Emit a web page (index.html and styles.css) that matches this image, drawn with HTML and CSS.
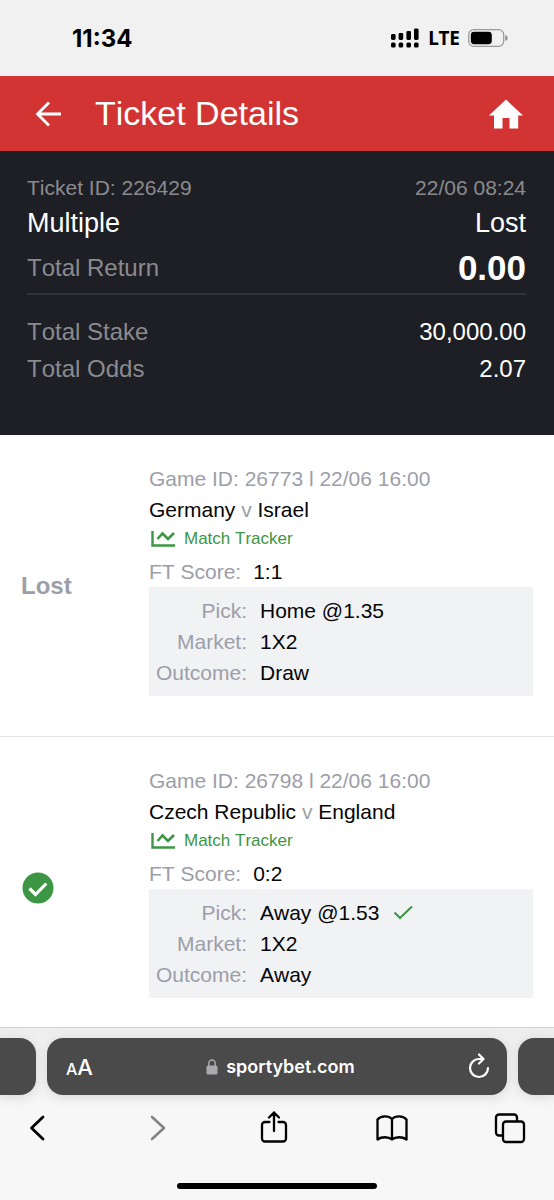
FILE: index.html
```html
<!DOCTYPE html>
<html lang="en">
<head>
<meta charset="utf-8">
<meta name="viewport" content="width=device-width, initial-scale=1">
<title>Ticket Details</title>
<link rel="stylesheet" href="styles.css">
</head>
<body>
<div class="status-bar">
  <time class="clock">11:34</time>
  <div class="status-icons">
    <svg class="signal" width="30" height="20" viewBox="0 0 30 20" aria-hidden="true">
      <rect x="1" y="6" width="4.600" height="6" rx="1.400"/><rect x="8.600" y="5" width="4.600" height="7" rx="1.400"/><rect x="16.400" y="3" width="4.600" height="9" rx="1.400"/><rect x="24" y="0.500" width="4.600" height="11.500" rx="1.400"/>
      <rect x="1" y="14.500" width="4.600" height="5" rx="1.500"/><rect x="8.600" y="14.500" width="4.600" height="5" rx="1.500"/><rect x="16.400" y="14.500" width="4.600" height="5" rx="1.500"/><rect x="24" y="14.500" width="4.600" height="5" rx="1.500"/>
    </svg>
    <span class="network">LTE</span>
    <svg width="40" height="18" viewBox="0 0 40 18" aria-hidden="true">
      <rect x="0.700" y="0.700" width="35" height="16.600" rx="5" fill="none" stroke="#9b9b9b" stroke-width="1.300"/>
      <rect x="2.800" y="2.800" width="21" height="12.400" rx="3.400"/>
      <path d="M37.300 6v6c1.500-.6 2.300-1.700 2.300-3s-.8-2.400-2.300-3z" fill="#8c8c8c"/>
    </svg>
  </div>
</div>

<header class="page-header">
  <button class="icon-button" type="button" aria-label="Back">
    <svg width="26" height="26" viewBox="0 0 26 26" fill="none" stroke="#fff" stroke-width="2.800"><path d="M26 13H3M14 1.500L2.500 13 14 24.500"/></svg>
  </button>
  <h1 class="page-title">Ticket Details</h1>
  <a class="home-link" href="#" aria-label="Home">
    <svg width="34" height="30" viewBox="0 0 34 30" fill="#fff"><path d="M17 0.500L34 16.500H29.200V29.500H20.500V19H13.500V29.500H5V16.500H0z"/></svg>
  </a>
</header>

<section class="summary">
  <div class="line line-id"><span>Ticket ID: 226429</span><span>22/06 08:24</span></div>
  <div class="line line-type"><span>Multiple</span><span>Lost</span></div>
  <div class="line line-return"><span class="muted">Total Return</span><strong class="amount">0.00</strong></div>
  <div class="totals">
    <div class="line line-total"><span class="muted">Total Stake</span><span>30,000.00</span></div>
    <div class="line line-total"><span class="muted">Total Odds</span><span>2.07</span></div>
  </div>
</section>

<main class="bets">
  <article class="bet">
    <div class="bet-status">Lost</div>
    <div class="bet-body">
      <p class="game muted-light">Game ID: 26773 l 22/06 16:00</p>
      <p class="teams">Germany <span class="muted-light">v</span> Israel</p>
      <a class="tracker" href="#">
        <svg width="24" height="17" viewBox="0 0 24 17" fill="none" stroke="#3c9644"><path d="M1.500 1v14.500H24" stroke-width="2.400"/><path d="M6.500 9l5-5.500 5.500 5.500 6-6" stroke-width="2.600"/></svg>
        Match Tracker</a>
      <p class="score"><span class="muted-light">FT Score:</span><span>1:1</span></p>
      <dl class="details">
        <dt>Pick:</dt><dd>Home @1.35</dd>
        <dt>Market:</dt><dd>1X2</dd>
        <dt>Outcome:</dt><dd>Draw</dd>
      </dl>
    </div>
  </article>
  <article class="bet">
    <div class="bet-status">
      <svg class="won" width="34" height="32" viewBox="0 0 34 32" role="img" aria-label="Won"><circle cx="17" cy="16" r="15.500" fill="#3c9644"/><path d="M8.500 16.500l6 6L25.300 11.500" fill="none" stroke="#fff" stroke-width="3.200"/></svg>
    </div>
    <div class="bet-body">
      <p class="game muted-light">Game ID: 26798 l 22/06 16:00</p>
      <p class="teams">Czech Republic <span class="muted-light">v</span> England</p>
      <a class="tracker" href="#">
        <svg width="24" height="17" viewBox="0 0 24 17" fill="none" stroke="#3c9644"><path d="M1.500 1v14.500H24" stroke-width="2.400"/><path d="M6.500 9l5-5.500 5.500 5.500 6-6" stroke-width="2.600"/></svg>
        Match Tracker</a>
      <p class="score"><span class="muted-light">FT Score:</span><span>0:2</span></p>
      <dl class="details">
        <dt>Pick:</dt><dd>Away @1.53 <svg width="20" height="15" viewBox="0 0 20 15" fill="none" stroke="#3c9644" stroke-width="2"><path d="M1.500 7.500l5.500 5.500L19 1.500"/></svg></dd>
        <dt>Market:</dt><dd>1X2</dd>
        <dt>Outcome:</dt><dd>Away</dd>
      </dl>
    </div>
  </article>
</main>

<footer class="browser-bar">
  <div class="tabs">
    <div class="tab-edge tab-edge-left"></div>
    <div class="address">
      <button class="text-size" type="button" aria-label="Text size"><span class="small-a">A</span>A</button>
      <div class="site">
        <svg width="12" height="16" viewBox="0 0 12 16" aria-hidden="true"><rect x="0.500" y="6.500" width="11" height="9" rx="1.500" fill="#a9a9ae"/><path d="M2.800 7V4.500a3.200 3.500 0 0 1 6.400 0V7" fill="none" stroke="#a9a9ae" stroke-width="1.500"/></svg>
        <span>sportybet.com</span>
      </div>
      <button class="icon-button" type="button" aria-label="Reload">
        <svg width="22" height="28" viewBox="0 0 22 28" fill="none" stroke="#fff" stroke-width="2.200" stroke-linecap="round" stroke-linejoin="round"><path d="M20 15a9 9 0 1 1-9-9h4.500M11 1.500l4.500 4.500-4.500 4.500"/></svg>
      </button>
    </div>
    <div class="tab-edge tab-edge-right"></div>
  </div>
  <nav class="tools" aria-label="Browser">
    <button class="tool" type="button" aria-label="Previous page"><svg width="34" height="34" viewBox="0 0 34 34"><path d="M23 7L11.500 18 23 29" stroke-width="2.800"/></svg></button>
    <button class="tool tool-off" type="button" aria-label="Next page"><svg width="34" height="34" viewBox="0 0 34 34"><path d="M14 7L26 18 14 29" stroke-width="2.600"/></svg></button>
    <button class="tool" type="button" aria-label="Share"><svg width="34" height="34" viewBox="0 0 34 34"><path d="M12.500 12H8a3 3 0 0 0-3 3v13.500a3 3 0 0 0 3 3h18a3 3 0 0 0 3-3V15a3 3 0 0 0-3-3h-4.500M17 21V2.500M12 7.500l5-5 5 5"/></svg></button>
    <button class="tool" type="button" aria-label="Bookmarks"><svg width="34" height="34" viewBox="0 0 34 34"><path d="M17 9C13.500 5.500 6 5.500 2.500 9.500v20c4-3 11-3 14.500 0 3.500-3 10.500-3 14.500 0v-20C28 5.500 20.500 5.500 17 9zM17 9v20.500"/></svg></button>
    <button class="tool" type="button" aria-label="Tabs"><svg width="34" height="34" viewBox="0 0 34 34"><path d="M9.500 25.500H6a3 3 0 0 1-3-3V7.500a3 3 0 0 1 3-3h15a3 3 0 0 1 3 3V11"/><rect x="10" y="11.500" width="21" height="20.500" rx="3"/></svg></button>
  </nav>
  <div class="home-indicator"></div>
</footer>
</body>
</html>
```
FILE: styles.css
```css
* { box-sizing: border-box; }

body {
  margin: 0;
  height: 100vh;
  display: flex;
  flex-direction: column;
  background: #fff;
  color: #050505;
  font-family: "Liberation Sans", Arial, sans-serif;
  font-size: 21px;
  font-kerning: none;
}

h1, p, dl, dd { margin: 0; }
button { padding: 0; border: 0; background: none; color: inherit; font: inherit; }
svg { display: block; flex: none; }

.status-bar {
  display: flex;
  justify-content: space-between;
  align-items: center;
  height: 76px;
  padding: 0 46px 0 72px;
  background: #f1f1f1;
  color: #000;
}
.clock { font: 700 24px Inter, sans-serif; }
.status-icons { display: flex; align-items: center; gap: 8px; }
.network { font: 700 19px "Noto Sans", sans-serif; }

.page-header {
  display: flex;
  align-items: center;
  height: 75px;
  padding: 0 31px 0 35px;
  background: #d23434;
  color: #fff;
}
.page-title { flex: 1; padding-left: 34px; font-size: 34px; font-weight: 400; }

.summary {
  padding: 21px 28px 48px 27px;
  background: #1e1f25;
  color: #fff;
}
.line { display: flex; justify-content: space-between; align-items: center; }
.line-id { height: 32px; color: #8b8b8f; }
.line-type { height: 39px; font-size: 27px; }
.line-return { height: 50px; font-size: 24px; }
.line-total { height: 37px; font-size: 24px; }
.amount { font-size: 35px; }
.muted { color: #8b8b8f; }
.totals { padding-top: 18px; border-top: 2px solid #30323b; }

.bets { flex: 1; min-height: 0; overflow-y: auto; scrollbar-width: none; }
.bet {
  display: grid;
  grid-template-columns: 128px 1fr;
  padding: 28px 21px 40px;
  border-bottom: 1px solid #e6e6e8;
}
.bet-status {
  align-self: center;
  padding-top: 12px;
  color: #9c9ea9;
  font-size: 24px;
  font-weight: 700;
}
.muted-light { color: #9c9ea9; }
.game, .teams { line-height: 31px; }
.tracker {
  display: flex;
  align-items: center;
  gap: 9px;
  padding-left: 2px;
  margin-bottom: 5px;
  color: #3c9644;
  font-size: 17px;
  line-height: 27px;
  text-decoration: none;
}
.score { display: flex; gap: 12px; line-height: 30px; }
.details {
  display: grid;
  grid-template-columns: 98px 1fr;
  column-gap: 13px;
  padding: 8px 0;
  background: #f1f2f4;
  line-height: 31px;
}
.details dt { color: #9c9ea9; text-align: right; }
.details dd { display: flex; align-items: center; gap: 14px; }

.browser-bar {
  padding: 10px 0 11px;
  border-top: 1px solid #d4d4d4;
  background: linear-gradient(#eeeeee, #f7f7f8 50%);
}
.tabs { display: flex; gap: 11px; height: 57px; }
.tab-edge, .address { background: #4a4a4a; box-shadow: 0 2px 12px #0000001f; }
.tab-edge { width: 36px; }
.tab-edge-left { border-radius: 0 16px 16px 0; }
.tab-edge-right { border-radius: 16px 0 0 16px; }
.address {
  flex: 1;
  display: flex;
  align-items: center;
  justify-content: space-between;
  padding: 0 17px 0 19px;
  border-radius: 16px;
  color: #fff;
  font: 600 18px Inter, sans-serif;
}
.text-size { font-size: 22px; font-weight: 500; }
.small-a { font-size: 16px; }
.site { display: flex; align-items: center; gap: 8px; }
.tools { display: flex; justify-content: space-between; padding: 15px 27px 39px 20px; }
.tool svg {
  fill: none;
  stroke: #000;
  stroke-width: 2.3;
  stroke-linecap: round;
  stroke-linejoin: round;
}
.tool-off svg { stroke: #858585; }
.home-indicator { width: 36%; height: 6px; margin: 0 auto; border-radius: 3px; background: #000; }
```
